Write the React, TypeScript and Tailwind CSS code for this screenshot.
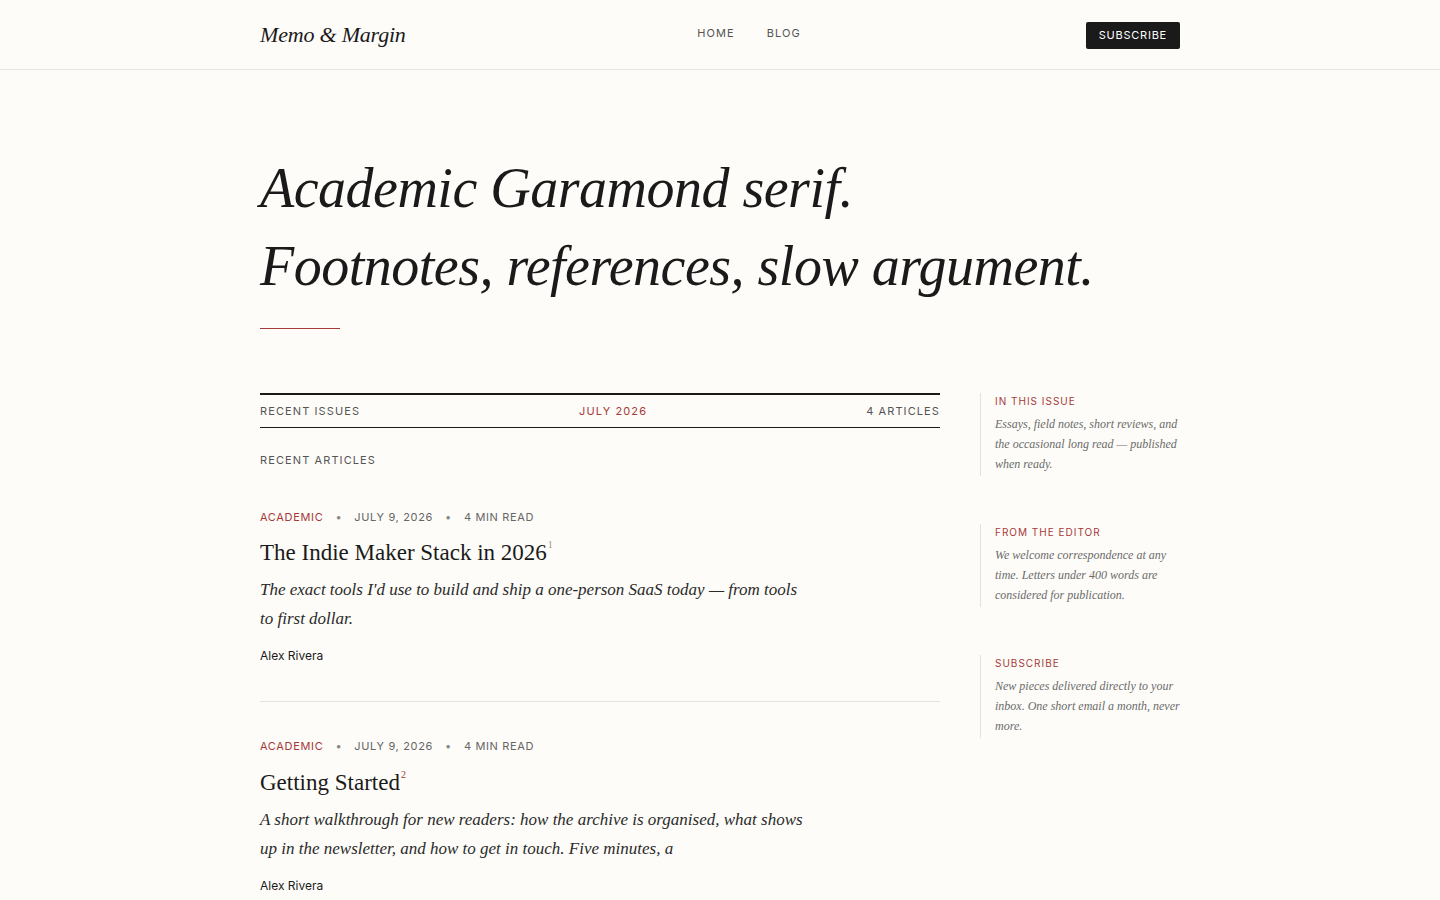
import React from "react";

const serif = "font-['Liberation_Serif',serif]";
const sans = "font-['Inter',sans-serif]";

const articles = [
  {
    title: "The Indie Maker Stack in 2026",
    note: "1",
    excerpt: "The exact tools I'd use to build and ship a one-person SaaS today — from tools to first dollar.",
  },
  {
    title: "Getting Started",
    note: "2",
    excerpt:
      "A short walkthrough for new readers: how the archive is organised, what shows up in the newsletter, and how to get in touch. Five minutes, a",
  },
];

const notes = [
  {
    label: "In this issue",
    text: "Essays, field notes, short reviews, and the occasional long read — published when ready.",
  },
  {
    label: "From the editor",
    text: "We welcome correspondence at any time. Letters under 400 words are considered for publication.",
  },
  {
    label: "Subscribe",
    text: "New pieces delivered directly to your inbox. One short email a month, never more.",
  },
];

export default function App() {
  return (
    <div className={`min-h-screen bg-[#fdfcf8] text-[#1a1a1a] ${sans}`}>
      {/* Header */}
      <header className="border-b border-[#e8e5de]">
        <div className="mx-auto w-[920px] h-[69px] grid grid-cols-3 items-center">
          <a className={`${serif} italic text-[22px] text-[#1a1a1a] tracking-[-0.2px]`}>Memo &amp; Margin</a>
          <nav className="flex justify-center gap-8 text-[11px] tracking-[0.1em] text-[#555] -mt-[2px] pl-[58px]">
            <a>HOME</a>
            <a>BLOG</a>
          </nav>
          <div className="flex justify-end">
            <button className="bg-[#1a1a1a] text-white text-[11px] tracking-[0.07em] h-[27px] px-[13px] mt-[2px] rounded-[2px]">
              SUBSCRIBE
            </button>
          </div>
        </div>
      </header>

      <main className="mx-auto w-[920px]">
        {/* Hero */}
        <section className="pt-[79px]">
          <h1 className={`${serif} italic text-[56px] leading-[78px] tracking-[-0.5px] text-[#1a1a1a]`}>
            Academic Garamond serif.
            <br />
            Footnotes, references, slow argument.
          </h1>
          <div className="mt-[23px] w-20 h-px bg-[#a63a3a]" />
        </section>

        <div className="mt-[64px] flex gap-10">
          {/* Articles */}
          <div className="w-[680px]">
            <div className="border-t-2 border-b border-[#1a1a1a] h-[35px] flex items-center justify-between text-[11px] tracking-[0.1em] text-[#555]">
              <span>RECENT ISSUES</span>
              <span className="text-[#a63a3a]">JULY 2026</span>
              <span>4 ARTICLES</span>
            </div>
            <p className="mt-[24px] text-[11px] tracking-[0.1em] text-[#555]">RECENT ARTICLES</p>

            {articles.map((a, i) => (
              <article
                key={a.title}
                className={i === 0 ? "pt-[40px] pb-[36px] border-b border-[#e5e2db]" : "pt-[36px] pb-[36px]"}
              >
                <div className="flex items-center gap-3 text-[11px] tracking-[0.06em] text-[#666]">
                  <span className="text-[#a63a3a]">ACADEMIC</span>
                  <span className="text-[#888]">•</span>
                  <span>JULY 9, 2026</span>
                  <span className="text-[#888]">•</span>
                  <span>4 MIN READ</span>
                </div>
                <h2 className={`${serif} mt-[12px] text-[23px] leading-[32px] text-[#1a1a1a]`}>
                  {a.title}
                  <sup className={`text-[10px] ${i === 0 ? "text-[#999]" : "text-[#a63a3a]"} -top-[12px] ml-[1px]`}>
                    {a.note}
                  </sup>
                </h2>
                <p className={`${serif} italic mt-[6px] text-[17px] leading-[29px] text-[#2a2a2a] max-w-[545px]`}>
                  {a.excerpt}
                </p>
                <p className="mt-[14px] text-[12px] text-[#1a1a1a]">Alex Rivera</p>
              </article>
            ))}
          </div>

          {/* Sidebar */}
          <aside className="w-[200px] flex flex-col gap-[48px]">
            {notes.map((n) => (
              <div key={n.label} className="border-l border-[#e5e2db] pl-[14px] pb-[2px]">
                <p className="text-[10px] tracking-[0.1em] uppercase text-[#a63a3a] pt-[1px]">{n.label}</p>
                <p className={`${serif} italic mt-[5px] text-[12px] leading-[20px] text-[#6b6b6b]`}>{n.text}</p>
              </div>
            ))}
          </aside>
        </div>
      </main>
    </div>
  );
}
